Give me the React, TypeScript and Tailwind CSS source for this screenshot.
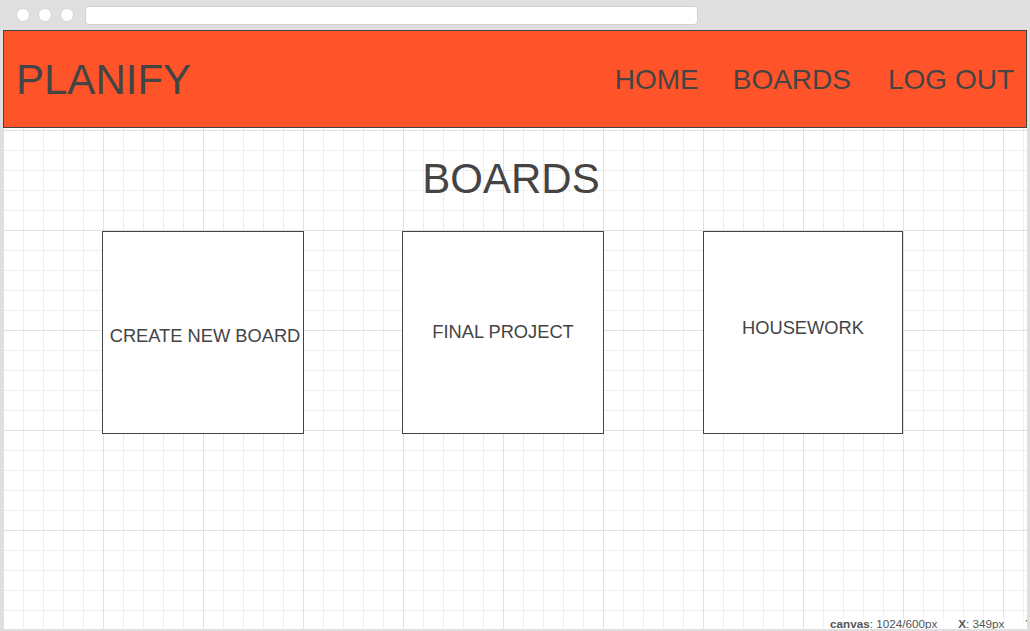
import React from 'react'

const boards = [
  { name: 'CREATE NEW BOARD', box: 'w-[202px] pt-[8px] pl-[4px]', gap: '' },
  { name: 'FINAL PROJECT', box: 'w-[202px]', gap: 'ml-[98px]' },
  { name: 'HOUSEWORK', box: 'w-[200px] pb-[8px]', gap: 'ml-[99px]' },
]

export default function App() {
  return (
    <div className="w-[1030px] h-[631px] bg-[#dfdfdf] flex flex-col font-['Liberation_Sans',Arial,sans-serif] text-[#444] overflow-hidden">
      {/* browser chrome */}
      <div className="h-[30px] shrink-0 flex items-center pl-[16px]">
        <div className="flex gap-[8px]">
          <div className="w-[14px] h-[14px] rounded-full bg-white border border-[#d6d6d6]" />
          <div className="w-[14px] h-[14px] rounded-full bg-white border border-[#d6d6d6]" />
          <div className="w-[14px] h-[14px] rounded-full bg-white border border-[#d6d6d6]" />
        </div>
        <div className="ml-[11px] w-[613px] h-[19px] bg-white rounded-[4px] border border-[#d2d2d2]" />
      </div>

      <div className="flex px-[3px]">
        <div className="relative w-[1024px] h-[599px] overflow-hidden bg-white [background-image:linear-gradient(to_right,#e1e1e1_1px,transparent_1px),linear-gradient(to_bottom,#e1e1e1_1px,transparent_1px),linear-gradient(to_right,#eeeeee_1px,transparent_1px),linear-gradient(to_bottom,#eeeeee_1px,transparent_1px)] [background-size:100px_100px,100px_100px,20px_20px,20px_20px]">
          <header className="h-[98px] bg-[#ff5429] border border-[#444] flex items-center pl-[12px] pr-[12px]">
            <div className="text-[42px] leading-none pt-[2px]">PLANIFY</div>
            <nav className="ml-auto flex items-center text-[28px] leading-none pt-[2px]">
              <a>HOME</a>
              <a className="ml-[34px]">BOARDS</a>
              <a className="ml-[37px]">LOG OUT</a>
            </nav>
          </header>

          <h1 className="mt-[30px] text-center pr-[8px] text-[42px] leading-none">BOARDS</h1>

          <div className="mt-[31px] flex pl-[99px]">
            {boards.map((b) => (
              <div
                key={b.name}
                className={`${b.box} ${b.gap} h-[203px] bg-white border border-[#444] flex items-center justify-center text-[18.3px] leading-none whitespace-nowrap`}
              >
                {b.name}
              </div>
            ))}
          </div>

          <div className="absolute left-[827px] bottom-[-1px] flex gap-[21px] text-[11.7px] leading-none text-[#555] whitespace-nowrap bg-white/70">
            <span>
              <b>canvas</b>: 1024/600px
            </span>
            <span>
              <b>X</b>: 349px
            </span>
            <span>
              <b>Y</b>
            </span>
          </div>
        </div>
      </div>
      <div className="h-[2px] shrink-0" />
    </div>
  )
}
